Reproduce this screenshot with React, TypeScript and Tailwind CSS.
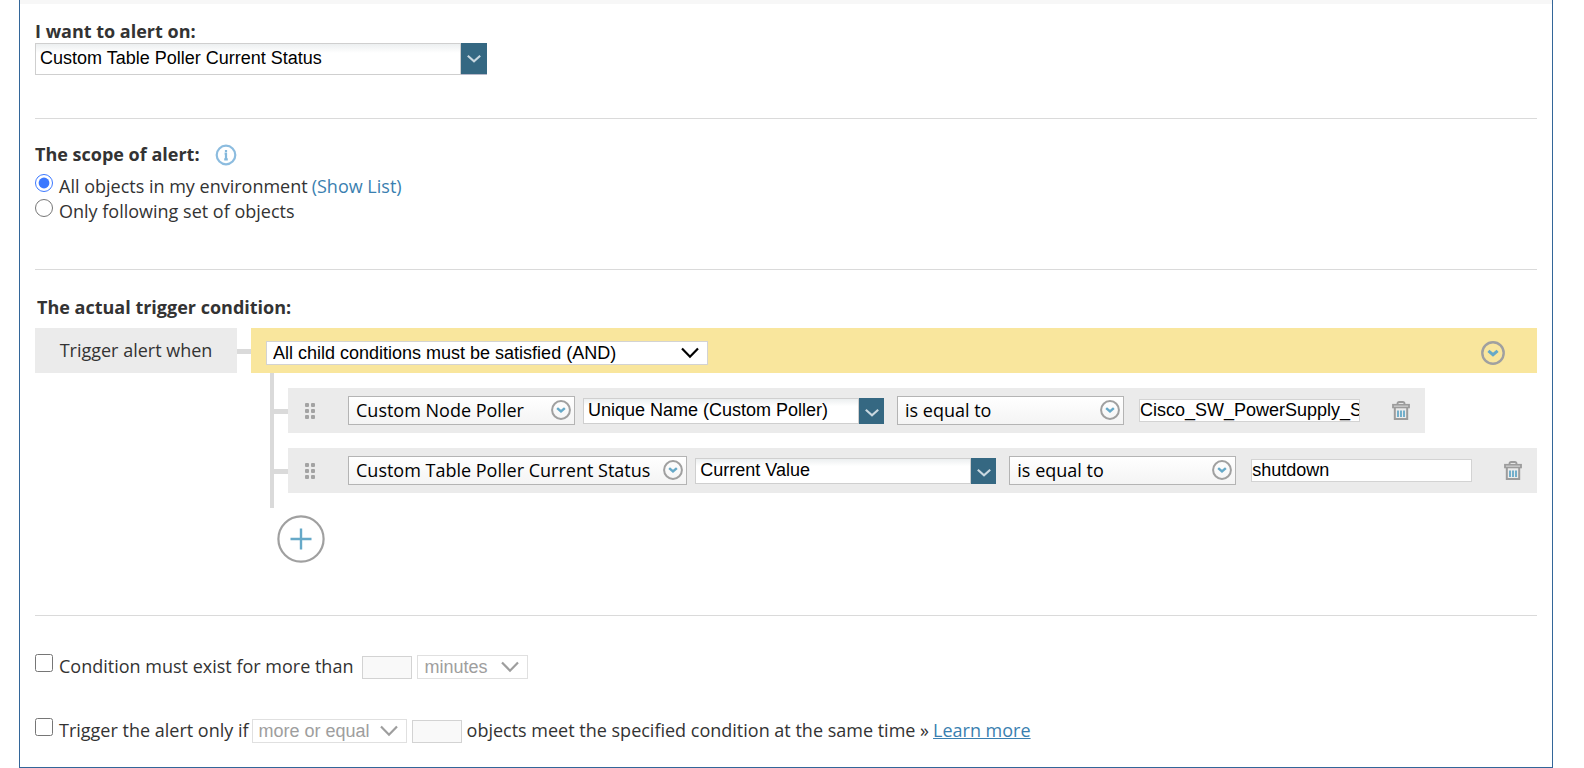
import { useState } from "react";
import type { ReactNode } from "react";

interface Condition {
  id: string;
  source: string;
  field: string;
  operator: string;
  value: string;
}

const initialConditions: Condition[] = [
  {
    id: "c1",
    source: "Custom Node Poller",
    field: "Unique Name (Custom Poller)",
    operator: "is equal to",
    value: "Cisco_SW_PowerSupply_Status",
  },
  {
    id: "c2",
    source: "Custom Table Poller Current Status",
    field: "Current Value",
    operator: "is equal to",
    value: "shutdown",
  },
];

function CircleChevron({ className }: { className: string }) {
  return (
    <svg viewBox="0 0 24 24" fill="none" className={className} aria-hidden="true">
      <circle cx="12" cy="12" r="10.7" stroke="#a0a0a0" strokeWidth="2.4" />
      <path d="M7.4 9.8l4.6 3.9 4.6-3.9" stroke="#66a9c8" strokeWidth="3" />
    </svg>
  );
}

function SelectChevron({ className }: { className: string }) {
  return (
    <svg viewBox="0 0 18 12" fill="none" className={className} aria-hidden="true">
      <path d="M1 1.5l8 8.2 8-8.2" stroke="currentColor" strokeWidth="2.2" />
    </svg>
  );
}

function TrashIcon() {
  return (
    <svg viewBox="0 0 18 19" fill="none" className="h-[19px] w-[18px]" aria-hidden="true">
      <path d="M5.5 3.5V2.6Q5.5 1 7.2 1h3.6q1.7 0 1.7 1.6v.9" stroke="#9c9c9c" strokeWidth="1.8" />
      <rect x="1" y="3.8" width="16" height="2.6" stroke="#9c9c9c" strokeWidth="1.8" />
      <path d="M2.8 6.6v11.4h12.4V6.6" stroke="#9c9c9c" strokeWidth="2" />
      <path d="M6 9.5v6.5M9 9.5v6.5M12 9.5v6.5" stroke="#66a9c8" strokeWidth="1.8" />
    </svg>
  );
}

function DragHandle() {
  return (
    <svg viewBox="0 0 10 16" fill="#a3a3a3" className="h-4 w-[10px]" aria-hidden="true">
      {[0, 6, 12].map((y) => (
        <g key={y}>
          <rect x="0" y={y} width="4" height="4" rx="1" />
          <rect x="6" y={y} width="4" height="4" rx="1" />
        </g>
      ))}
    </svg>
  );
}

interface ComboProps {
  label: string;
  value: string;
  id?: string;
  large?: boolean;
}

function Combo({ label, value, id, large }: ComboProps) {
  return (
    <div className={large ? "flex h-8 w-[452px]" : "flex h-[26px] w-[301px]"}>
      <input
        id={id}
        type="text"
        aria-label={label}
        defaultValue={value}
        className={`min-w-0 flex-1 border border-[#cfcfcf] bg-white bg-linear-to-b from-[#eceff0] to-white to-30% pl-1 font-['Liberation_Sans',sans-serif] text-lg leading-5 text-black outline-none ${
          large ? "pb-[3px]" : "pb-0.5"
        }`}
      />
      <button
        type="button"
        aria-label={`Open ${label}`}
        className={`flex items-center justify-center bg-[#356882] text-[#c9d8e0] ${
          large ? "w-[26px] border-b border-[#b8b8c8]" : "w-[25px] pt-1"
        }`}
      >
        <svg viewBox="0 0 14 8" fill="none" className="h-2 w-[14px]" aria-hidden="true">
          <path d="M.8 .8L7 6.4 13.2 .8" stroke="currentColor" strokeWidth="2.1" />
        </svg>
      </button>
    </div>
  );
}

function Picker({ children }: { children: ReactNode }) {
  return (
    <button
      type="button"
      className="flex h-[29px] min-w-[227px] items-center justify-between gap-[13px] border border-[#b4b4b4] bg-linear-to-b from-white to-[#f4f4f4] pr-[3px] pb-0.5 pl-[7px] text-lg leading-6 whitespace-nowrap text-black"
    >
      {children}
      <CircleChevron className="size-5 shrink-0" />
    </button>
  );
}

interface DropdownProps {
  id: string;
  label: string;
  options: string[];
  className: string;
  disabled?: boolean;
}

function Dropdown({ id, label, options, className, disabled }: DropdownProps) {
  return (
    <div className={`relative h-6 ${className}`}>
      <select
        id={id}
        aria-label={label}
        disabled={disabled}
        className="h-full w-full appearance-none border border-[#d3d3d3] bg-white pl-1.5 font-['Liberation_Sans',sans-serif] text-lg leading-5 text-black disabled:border-[#e0e0e0] disabled:text-[#9e9e9e] disabled:opacity-100"
      >
        {options.map((option) => (
          <option key={option}>{option}</option>
        ))}
      </select>
      <SelectChevron
        className={`pointer-events-none absolute top-[7px] right-[9px] h-3 w-[18px] ${
          disabled ? "text-[#9e9e9e]" : "text-black"
        }`}
      />
    </div>
  );
}

function ConditionRow({ condition, onRemove }: { condition: Condition; onRemove: () => void }) {
  return (
    <li className="flex items-center">
      <span className="mt-0.5 h-[5px] w-[14px] shrink-0 bg-[#dadada]" />
      <div className="flex h-[45px] items-center bg-[#ebebeb] pr-[15px] pl-[17px]">
        <DragHandle />
        <div className="ml-[33px] flex items-center">
          <Picker>{condition.source}</Picker>
          <div className="ml-2">
            <Combo label="Field" value={condition.field} />
          </div>
          <div className="ml-[13px]">
            <Picker>{condition.operator}</Picker>
          </div>
          <input
            type="text"
            aria-label="Value"
            defaultValue={condition.value}
            className="ml-[15px] h-[23px] w-[221px] border border-[#d3d3d3] bg-white font-['Liberation_Sans',sans-serif] text-lg leading-5 text-black outline-none"
          />
        </div>
        <button type="button" aria-label="Delete condition" onClick={onRemove} className="ml-8">
          <TrashIcon />
        </button>
      </div>
    </li>
  );
}

export default function App() {
  const [conditions, setConditions] = useState(initialConditions);
  const [scope, setScope] = useState("all");

  const addCondition = () =>
    setConditions([...conditions, { ...initialConditions[1], id: `c${Date.now()}`, value: "" }]);

  return (
    <div className="bg-white pr-[31px] pl-[19px] font-['Open_Sans',sans-serif] text-lg leading-[25px] text-[#333333]">
      <main className="border-x border-b border-[#336699] pb-6">
        <div className="h-1 bg-[#f7f7f7]" />
        <div className="px-[15px]">
          <section className="border-b border-[#dadada] pt-[15px] pb-[43px]">
            <label htmlFor="alert-on" className="block h-6 font-bold">
              I want to alert on:
            </label>
            <Combo id="alert-on" label="I want to alert on:" value="Custom Table Poller Current Status" large />
          </section>

          <section className="border-b border-[#dadada] pt-[23px] pb-[45px]">
            <div className="flex items-center gap-[15px]">
              <h2 className="font-bold">The scope of alert:</h2>
              <button type="button" aria-label="About scope">
                <svg viewBox="0 0 22 22" fill="none" className="size-[22px]" aria-hidden="true">
                  <circle cx="11" cy="11" r="9.3" stroke="#8cbcdf" strokeWidth="2.2" />
                  <path d="M11 6v2M9.6 9.7H11v5.6M9.2 15.3h3.6" stroke="#84b8dc" strokeWidth="2.2" />
                </svg>
              </button>
            </div>
            <div className="mt-[7px] flex gap-1.5">
              <input
                id="scope-all"
                type="radio"
                name="scope"
                checked={scope === "all"}
                onChange={() => setScope("all")}
                className="size-[18px] accent-[#3b78ff]"
              />
              <div className="flex gap-1">
                <label htmlFor="scope-all">All objects in my environment</label>
                <a href="#list" className="text-[#3a7fb0]">
                  (Show List)
                </a>
              </div>
            </div>
            <div className="flex gap-1.5">
              <input
                id="scope-set"
                type="radio"
                name="scope"
                checked={scope === "set"}
                onChange={() => setScope("set")}
                className="size-[18px] accent-[#3b78ff]"
              />
              <label htmlFor="scope-set">Only following set of objects</label>
            </div>
          </section>

          <section className="border-b border-[#dadada] pt-[25px] pb-[52px]">
            <h2 className="pl-0.5 font-bold">The actual trigger condition:</h2>
            <div className="mt-2 flex items-start">
              <div className="flex h-[45px] w-[202px] shrink-0 items-center justify-center bg-[#ebebeb]">
                Trigger alert when
              </div>
              <span className="mt-[21px] h-[5px] w-[14px] shrink-0 bg-[#dadada]" />
              <div className="min-w-0 flex-1">
                <div className="flex h-[45px] items-center justify-between bg-[#f9e69d] pr-8 pl-[15px]">
                  <Dropdown
                    id="operator"
                    label="Child conditions operator"
                    options={[
                      "All child conditions must be satisfied (AND)",
                      "At least one child condition must be satisfied (OR)",
                    ]}
                    className="mt-0.5 w-[442px]"
                  />
                  <button type="button" aria-label="Group options" className="mt-1">
                    <CircleChevron className="size-6" />
                  </button>
                </div>
                <ul className="ml-[19px] flex flex-col gap-[15px] border-l-4 border-[#dadada] py-[15px]">
                  {conditions.map((condition) => (
                    <ConditionRow
                      key={condition.id}
                      condition={condition}
                      onRemove={() => setConditions(conditions.filter((c) => c.id !== condition.id))}
                    />
                  ))}
                </ul>
                <button type="button" aria-label="Add condition" onClick={addCondition} className="mt-[7px] ml-[26px] block">
                  <svg viewBox="0 0 48 48" fill="none" className="size-12" aria-hidden="true">
                    <circle cx="24" cy="24" r="22.6" stroke="#a0a0a0" strokeWidth="2.2" />
                    <path d="M24 13.5v21M13.5 24h21" stroke="#66a9c8" strokeWidth="2.4" />
                  </svg>
                </button>
              </div>
            </div>
          </section>

          <section className="pt-[38px]">
            <div className="flex items-start">
              <input id="exist" type="checkbox" className="size-[18px]" />
              <label htmlFor="exist" className="ml-1.5">
                Condition must exist for more than
              </label>
              <input
                type="text"
                disabled
                aria-label="Duration"
                className="mt-0.5 ml-[9px] h-[23px] w-[50px] border border-[#d3d3d3] bg-[#f9f9f9]"
              />
              <Dropdown
                id="unit"
                label="Duration unit"
                options={["minutes", "hours", "days"]}
                className="ml-[5px] w-[111px]"
                disabled
              />
            </div>
            <div className="mt-[39px] flex items-start">
              <input id="only-if" type="checkbox" className="size-[18px]" />
              <label htmlFor="only-if" className="ml-1.5">
                Trigger the alert only if
              </label>
              <Dropdown
                id="comparison"
                label="Comparison"
                options={["more or equal", "less or equal"]}
                className="ml-[3px] w-[155px]"
                disabled
              />
              <input
                type="text"
                disabled
                aria-label="Object count"
                className="mt-0.5 ml-[5px] h-[23px] w-[50px] border border-[#d3d3d3] bg-[#f9f9f9]"
              />
              <span className="ml-[5px]">objects meet the specified condition at the same time »</span>
              <a href="#learn" className="ml-1 text-[#3a7fb0] underline">
                Learn more
              </a>
            </div>
          </section>
        </div>
      </main>
    </div>
  );
}
